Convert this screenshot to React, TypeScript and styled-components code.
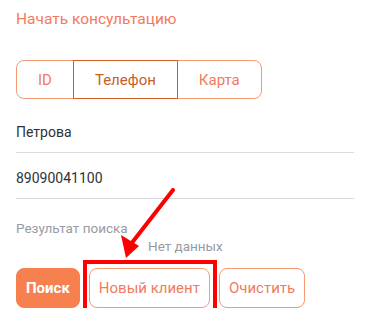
import { FC, useState } from 'react'
import styled, { createGlobalStyle } from 'styled-components'

const colors = {
  accent: '#f7804f',
  accentText: '#f27a5e',
  accentDark: '#d35d22',
  accentDarkText: '#c7601f',
  border: '#f59a72',
  text: '#2f3237',
  muted: '#979ba3',
  line: '#d9dae0',
  mark: '#ff0000',
}

const GlobalStyle = createGlobalStyle`
  html, body {
    margin: 0;
    padding: 0;
    background: #fff;
  }
  body {
    font-family: Roboto, 'Noto Sans', sans-serif;
  }
`

const tabs = ['ID', 'Телефон', 'Карта']

const App: FC = () => {
  const [active, setActive] = useState('Телефон')

  return (
    <>
      <GlobalStyle />
      <Page>
        <Title>Начать консультацию</Title>

        <Tabs>
          {tabs.map((t) => (
            <Tab key={t} $active={t === active} onClick={() => setActive(t)}>
              {t}
            </Tab>
          ))}
        </Tabs>

        <Field>
          <Input defaultValue="Петрова" />
        </Field>
        <Field>
          <Input defaultValue="89090041100" />
        </Field>

        <Label>Результат поиска</Label>
        <Empty>Нет данных</Empty>

        <Actions>
          <PrimaryButton>Поиск</PrimaryButton>
          <Highlight>
            <OutlineButton>Новый клиент</OutlineButton>
          </Highlight>
          <OutlineButton>Очистить</OutlineButton>
        </Actions>

        <Arrow viewBox="0 0 60 72" width="60" height="72">
          <line
            x1="56"
            y1="2"
            x2="14"
            y2="56"
            stroke={colors.mark}
            strokeWidth="4"
            strokeLinecap="round"
          />
          <polygon points="9,70 4,47 22,58" fill={colors.mark} />
        </Arrow>
      </Page>
    </>
  )
}

export default App

const Page = styled.div`
  position: relative;
  padding: 9px 16px 0 16px;
  width: 369px;
  box-sizing: border-box;
`

const Title = styled.div`
  font-size: 15.5px;
  line-height: 20px;
  color: ${colors.accentText};
  margin-bottom: 31px;
`

const Tabs = styled.div`
  display: flex;
  height: 39px;
  margin-bottom: 8px;
`

const Tab = styled.button<{ $active: boolean }>`
  position: relative;
  height: 100%;
  padding: 0 21px;
  margin-left: -1px;
  background: #fff;
  font-family: inherit;
  font-size: 15px;
  cursor: pointer;
  border: ${(p) =>
    p.$active ? `1.5px solid ${colors.accentDark}` : `1px solid ${colors.border}`};
  color: ${(p) => (p.$active ? colors.accentDarkText : colors.accentText)};
  z-index: ${(p) => (p.$active ? 1 : 0)};

  &:first-child {
    margin-left: 0;
    border-radius: 8px 0 0 8px;
  }

  &:last-child {
    border-radius: 0 8px 8px 0;
  }
`

const Field = styled.div`
  width: 338px;
  padding: 15px 0 10px;
  border-bottom: 1px solid ${colors.line};
`

const Input = styled.input`
  display: block;
  width: 100%;
  border: none;
  outline: none;
  padding: 0;
  font-family: inherit;
  font-size: 14px;
  line-height: 20px;
  height: 20px;
  color: ${colors.text};
  background: transparent;
`

const Label = styled.div`
  margin-top: 20px;
  font-size: 13.5px;
  line-height: 18px;
  color: ${colors.muted};
`

const Empty = styled.div`
  margin-left: 132px;
  font-size: 13.5px;
  line-height: 18px;
  color: ${colors.muted};
`

const Actions = styled.div`
  display: flex;
  gap: 9px;
  margin-top: 13px;
`

const ButtonBase = styled.button`
  height: 40px;
  padding: 0 9px;
  border-radius: 8px;
  font-family: inherit;
  font-size: 15px;
  cursor: pointer;
`

const PrimaryButton = styled(ButtonBase)`
  background: ${colors.accent};
  border: 1px solid ${colors.accent};
  color: #fff;
  font-weight: 700;
`

const OutlineButton = styled(ButtonBase)`
  background: #fff;
  border: 1px solid ${colors.border};
  color: ${colors.accentText};
`

const Highlight = styled.div`
  position: relative;
  display: flex;

  &::after {
    content: '';
    position: absolute;
    top: -8px;
    left: -6px;
    right: -7px;
    bottom: -6px;
    border: 4px solid ${colors.mark};
    pointer-events: none;
  }
`

const Arrow = styled.svg`
  position: absolute;
  left: 117px;
  top: 188px;
`
